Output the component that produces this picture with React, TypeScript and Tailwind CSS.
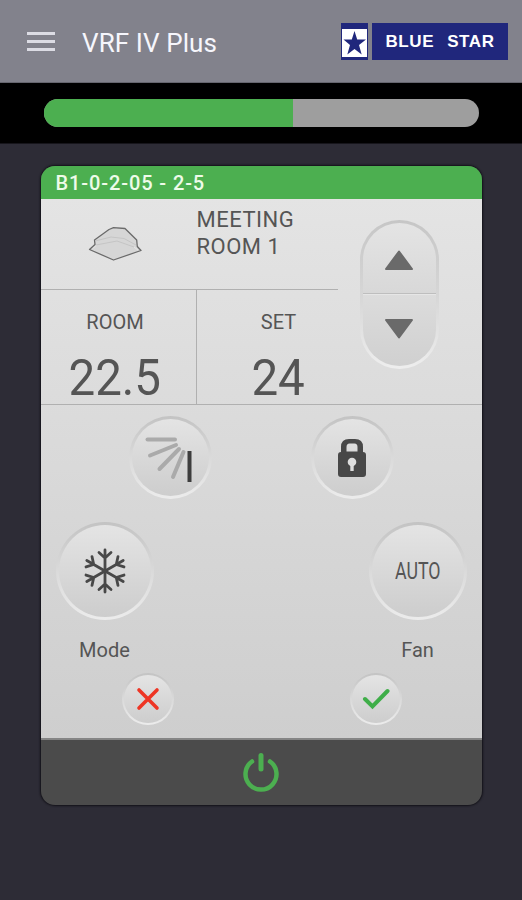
import React, { useState } from 'react';
import clsx from 'clsx';

interface RoundButtonProps {
  className?: string;
  label: string;
  onClick?: () => void;
  children: React.ReactNode;
}

// outer gradient is the bevel, inner one is the button face
const RoundButton: React.FC<RoundButtonProps> = ({ className, label, onClick, children }) => (
  <button
    aria-label={label}
    onClick={onClick}
    className={clsx('rounded-full bg-gradient-to-b from-[#c3c3c3] via-[#dadada] to-[#ececec]', className)}
  >
    <span className="flex size-full items-center justify-center rounded-full bg-gradient-to-b from-[#e4e4e4] to-[#cdcdcd]">
      {children}
    </span>
  </button>
);

const BrandLogo: React.FC = () => (
  <div className="flex h-[37px] gap-[4px]">
    <div className="w-[27px] border-x border-t-[6px] border-b-[3px] border-[#20277c] bg-white">
      <svg viewBox="0 0 25 28" className="block h-[28px] w-[25px]">
        <path
          d="M12.5 2 L15.2 10.5 L24 10.5 L17 16 L19.700 25.500 L12.5 20 L5.300 25.500 L8 16 L1.500 10.500 L9.800 10.500 Z"
          fill="#20277c"
        />
      </svg>
    </div>
    <div className="flex w-[136px] items-center justify-center gap-[13px] bg-[#20277c] font-['Liberation_Sans',sans-serif] text-[17px] font-bold leading-none tracking-[0.6px] text-white">
      <span>BLUE</span>
      <span>STAR</span>
    </div>
  </div>
);

const CassetteIcon: React.FC = () => (
  <svg width="54" height="36" viewBox="0 0 54 36" fill="none" strokeLinejoin="round">
    <path
      d="M1.500 23.500 L7 18.500 L6.500 14 L21 3.500 L25.500 1.700 L37 2.500 L48.700 14 L49.300 20.500 L53 24.500 L25.500 34 Z"
      fill="#d6d6d6"
      stroke="#6a6a6a"
      strokeWidth="1.3"
    />
    <path d="M7 15 L23 11 L36 12.500 L48 19 M8 19 L29 15 L46 21" stroke="#c0c0c0" strokeWidth="0.8" />
    <path d="M5 22.500 L8 19.500 M46 21 L50 24" stroke="#e6e6e6" strokeWidth="1" />
  </svg>
);

const VaneIcon: React.FC = () => (
  <svg width="52" height="50" viewBox="0 0 52 50" fill="none" stroke="#aaaaaa" strokeWidth="4" strokeLinecap="round">
    <path d="M3.500 6.500 H31" />
    <path d="M6 22.500 L32 12" />
    <path d="M15.500 36 L35 16" />
    <path d="M29 44 L39.500 19" />
    <path d="M45.500 18 V49" stroke="#3d3d3d" strokeLinecap="butt" />
  </svg>
);

const LockIcon: React.FC = () => (
  <svg width="28" height="38" viewBox="0 0 28 38">
    <path
      d="M3 13 V8 Q3 0 11 0 H17 Q25 0 25 8 V13 Q28 13 28 16 V35 Q28 38 25 38 H3 Q0 38 0 35 V16 Q0 13 3 13 Z M8.500 12.500 H19.500 V8 Q19.500 4.500 16.500 4.500 H11.500 Q8.500 4.500 8.500 8 Z"
      fill="#484848"
      fillRule="evenodd"
    />
    <circle cx="14" cy="23" r="4.300" fill="#dedede" />
    <path d="M12.300 24 H15.700 V32 H12.300 Z" fill="#dedede" />
  </svg>
);

const ARM_ANGLES = [0, 60, 120, 180, 240, 300];

const SnowflakeIcon: React.FC = () => (
  <svg width="44" height="46" viewBox="-22 -23 44 46" fill="none" stroke="#484848" strokeWidth="2.8" strokeLinecap="round">
    {ARM_ANGLES.map(angle => (
      <path key={angle} transform={`rotate(${angle})`} d="M0 0 V-21 M0 -13 L-6 -18.500 M0 -13 L6 -18.500" />
    ))}
  </svg>
);

const PowerIcon: React.FC = () => (
  <svg width="36" height="40" viewBox="0 0 36 40" fill="none" stroke="#4caf50" strokeWidth="4.500" strokeLinecap="round">
    <path d="M9 9.500 A15.500 15.500 0 1 0 27 9.500" />
    <path d="M18 3.500 V17" strokeWidth="5" />
  </svg>
);

const App: React.FC = () => {
  const [setPoint, setSetPoint] = useState(24);
  const progress = 57.3;

  return (
    <div className="flex h-[900px] w-[522px] flex-col overflow-hidden bg-[#2d2c36] font-['Roboto',sans-serif] text-[#555555]">
      <header className="flex h-[83px] shrink-0 items-center border-b border-[#66666f] bg-[#82828c] pl-[27px] pr-[14px]">
        <button aria-label="Menu" className="flex w-[28px] flex-col gap-[5px]">
          <span className="h-[3px] bg-[#dcdce4]" />
          <span className="h-[3px] bg-[#dcdce4]" />
          <span className="h-[3px] bg-[#dcdce4]" />
        </button>
        <h1 className="ml-[27px] flex-1 pt-[3px] text-[26px] leading-none tracking-[0.1px] text-[#f6f6fc]">VRF IV Plus</h1>
        <BrandLogo />
      </header>

      <div className="h-[61px] shrink-0 border-b border-[#16151b] bg-black px-[43.5px] pt-[16px]">
        <div className="h-[28px] overflow-hidden rounded-full bg-[#9e9e9e]">
          <div className="h-full bg-[#4caf50]" style={{ width: `${progress}%` }} />
        </div>
      </div>

      <main className="mx-auto mt-[22px] flex h-[639px] w-[441px] shrink-0 flex-col overflow-hidden rounded-[14px] bg-[#4b4b4b] shadow-[0_0_2px_1px_#121118]">
        <div className="flex h-[33px] shrink-0 items-center bg-[#4caf50] pl-[15px] pt-px text-[20px] font-medium leading-none tracking-[0.9px] text-[#eefbe9]">
          B1-0-2-05 - 2-5
        </div>

        <div className="flex h-[541px] shrink-0 flex-col border-b-2 border-[#858585] bg-gradient-to-b from-[#e4e4e4] to-[#cecece]">
          <section className="flex h-[206px] border-b border-[#b0b0b0]">
            <div className="flex w-[297px] flex-col">
              <div className="flex h-[91px] border-b border-[#b0b0b0]">
                <div className="flex w-[156px] items-center justify-center">
                  <div className="mr-[7px]">
                    <CassetteIcon />
                  </div>
                </div>
                <p className="w-[120px] pt-[7px] text-[22px] leading-[27px] tracking-[0.5px]">MEETING ROOM 1</p>
              </div>
              <div className="flex flex-1">
                <div className="flex w-[156px] flex-col items-center border-r border-[#b0b0b0] pr-[6px] pt-[22px]">
                  <span className="text-[20px] leading-[20px]">ROOM</span>
                  <span className="mt-[21px] scale-x-95 text-[50px] leading-[50px]">22.5</span>
                </div>
                <div className="flex flex-1 flex-col items-center pl-[23px] pt-[22px]">
                  <span className="text-[20px] leading-[20px]">SET</span>
                  <span className="mt-[21px] scale-x-95 text-[50px] leading-[50px]">{setPoint}</span>
                </div>
              </div>
            </div>
            <div className="flex flex-1 justify-center pr-[21px] pt-[21px]">
              <div className="h-[149px] w-[79px] rounded-full bg-gradient-to-b from-[#c6c6c6] via-[#d6d6d6] to-[#eeeeee] p-[3px]">
                <div className="flex size-full flex-col overflow-hidden rounded-full">
                  <button
                    aria-label="Raise set point"
                    onClick={() => setSetPoint(v => v + 1)}
                    className="flex h-[71px] justify-center border-b border-[#bebebe] bg-gradient-to-b from-[#e4e4e4] to-[#d8d8d8] pt-[27px]"
                  >
                    <svg width="30" height="20" viewBox="0 0 30 20">
                      <path d="M15 1.500 L28 19 H2 Z" fill="#6a6a6a" stroke="#6a6a6a" strokeWidth="2" strokeLinejoin="round" />
                    </svg>
                  </button>
                  <button
                    aria-label="Lower set point"
                    onClick={() => setSetPoint(v => v - 1)}
                    className="flex flex-1 justify-center border-t border-[#e6e6e6] bg-gradient-to-b from-[#dcdcdc] to-[#d0d0d0] pt-[24px]"
                  >
                    <svg width="30" height="20" viewBox="0 0 30 20">
                      <path d="M15 18.500 L28 1 H2 Z" fill="#6a6a6a" stroke="#6a6a6a" strokeWidth="2" strokeLinejoin="round" />
                    </svg>
                  </button>
                </div>
              </div>
            </div>
          </section>

          <section className="flex justify-between px-[88px] pt-[11px]">
            <RoundButton label="Air direction" className="size-[83px] p-[3px]">
              <VaneIcon />
            </RoundButton>
            <RoundButton label="Lock" className="size-[83px] p-[3px]">
              <LockIcon />
            </RoundButton>
          </section>

          <section className="flex justify-between px-[15px] pt-[23px]">
            <div className="flex w-[98px] flex-col items-center">
              <RoundButton label="Mode" className="size-[98px] p-[3px]">
                <SnowflakeIcon />
              </RoundButton>
              <span className="mt-[19px] text-[20px] leading-[22px]">Mode</span>
            </div>
            <div className="flex w-[98px] flex-col items-center">
              <RoundButton label="Fan speed" className="size-[98px] p-[3px]">
                <span className="scale-x-[0.74] text-[24px] leading-none">AUTO</span>
              </RoundButton>
              <span className="mt-[19px] text-[20px] leading-[22px]">Fan</span>
            </div>
          </section>

          <section className="flex justify-between pl-[81px] pr-[80px] pt-[12px]">
            <RoundButton label="Cancel" className="size-[52px] p-[2px]">
              <svg width="24" height="24" viewBox="0 0 24 24" fill="none" stroke="#ee3524" strokeWidth="3.600" strokeLinecap="round">
                <path d="M3 3 L21 21 M21 3 L3 21" />
              </svg>
            </RoundButton>
            <RoundButton label="Confirm" className="size-[52px] p-[2px]">
              <svg width="28" height="22" viewBox="0 0 28 22" fill="none" stroke="#3fae49" strokeWidth="4">
                <path d="M3 11 L10.500 18.500 L25.500 3" strokeLinecap="round" />
              </svg>
            </RoundButton>
          </section>
        </div>

        <footer className="flex flex-1 items-center justify-center pb-[2px]">
          <button aria-label="Power">
            <PowerIcon />
          </button>
        </footer>
      </main>
    </div>
  );
};

export default App;
